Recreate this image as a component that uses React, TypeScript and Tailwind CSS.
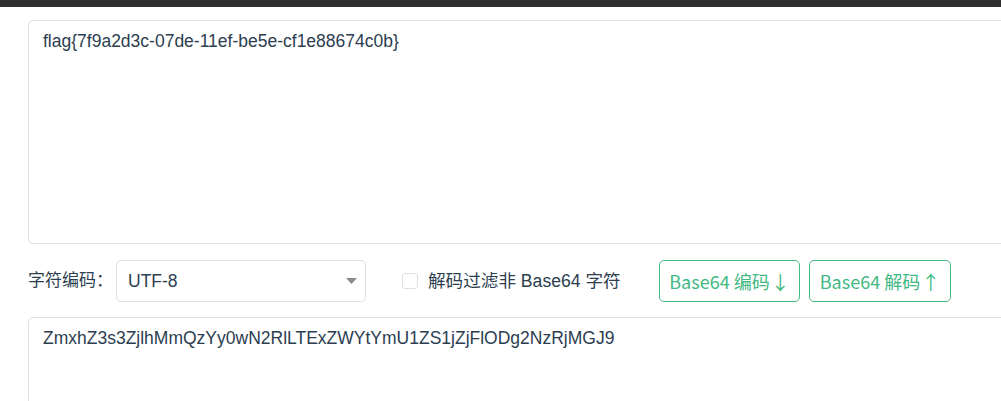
import React from "react";

const sans = { fontFamily: '"Liberation Sans", Arial, "Noto Sans CJK SC", sans-serif' };
const btnFont = { fontFamily: '"Noto Sans CJK SC", "Open Sans", sans-serif' };

export default function App() {
  return (
    <div className="w-[1001px] h-[401px] overflow-hidden bg-white" style={sans}>
      <div className="h-[7px] bg-[#2e2e2e]" />
      <div className="pl-[28px] pt-[13px]">
        <div className="w-[1000px] h-[224px] border border-[#dcdfe6] rounded-[5px] pl-[14px] pt-[8px] text-[17.5px] leading-[24px] text-[#2c3e50]">
          flag{"{"}7f9a2d3c-07de-11ef-be5e-cf1e88674c0b{"}"}
        </div>
        <div className="mt-[16px] flex items-center h-[42px]">
          <span className="text-[17px] text-[#2c3e50] w-[88px] shrink-0">字符编码：</span>
          <div className="w-[250px] h-[42px] border border-[#dcdfe6] rounded-[5px] flex items-center justify-between pl-[11px] pr-[8px]">
            <span className="text-[17.5px] text-[#2c3e50]">UTF-8</span>
            <svg width="11" height="6" viewBox="0 0 11 6">
              <polygon points="0,0 11,0 5.5,6" fill="#8c8c8c" />
            </svg>
          </div>
          <div className="ml-[36px] w-[221px] flex items-center shrink-0">
            <span className="w-[16px] h-[16px] border border-[#dcdfe6] rounded-[3px] bg-white" />
            <span className="ml-[10px] text-[17.6px] text-[#2c3e50] whitespace-nowrap">解码过滤非 Base64 字符</span>
          </div>
          <div className="ml-[36px] flex gap-[9px]">
            <button
              className="w-[141px] h-[42px] border border-[#42b983] rounded-[5px] text-[#42b983] text-[18px] bg-white flex items-center justify-center"
              style={btnFont}
            >
              Base64 编码<span className="ml-[1px] text-[19px] leading-none">↓</span>
            </button>
            <button
              className="w-[142px] h-[42px] border border-[#42b983] rounded-[5px] text-[#42b983] text-[18px] bg-white flex items-center justify-center"
              style={btnFont}
            >
              Base64 解码<span className="ml-[1px] text-[19px] leading-none">↑</span>
            </button>
          </div>
        </div>
        <div className="mt-[15px] w-[1000px] h-[120px] border border-[#dcdfe6] rounded-[5px] pl-[14px] pt-[8px] text-[17.5px] leading-[24px] text-[#2c3e50]">
          ZmxhZ3s3ZjlhMmQzYy0wN2RlLTExZWYtYmU1ZS1jZjFlODg2NzRjMGJ9
        </div>
      </div>
    </div>
  );
}
